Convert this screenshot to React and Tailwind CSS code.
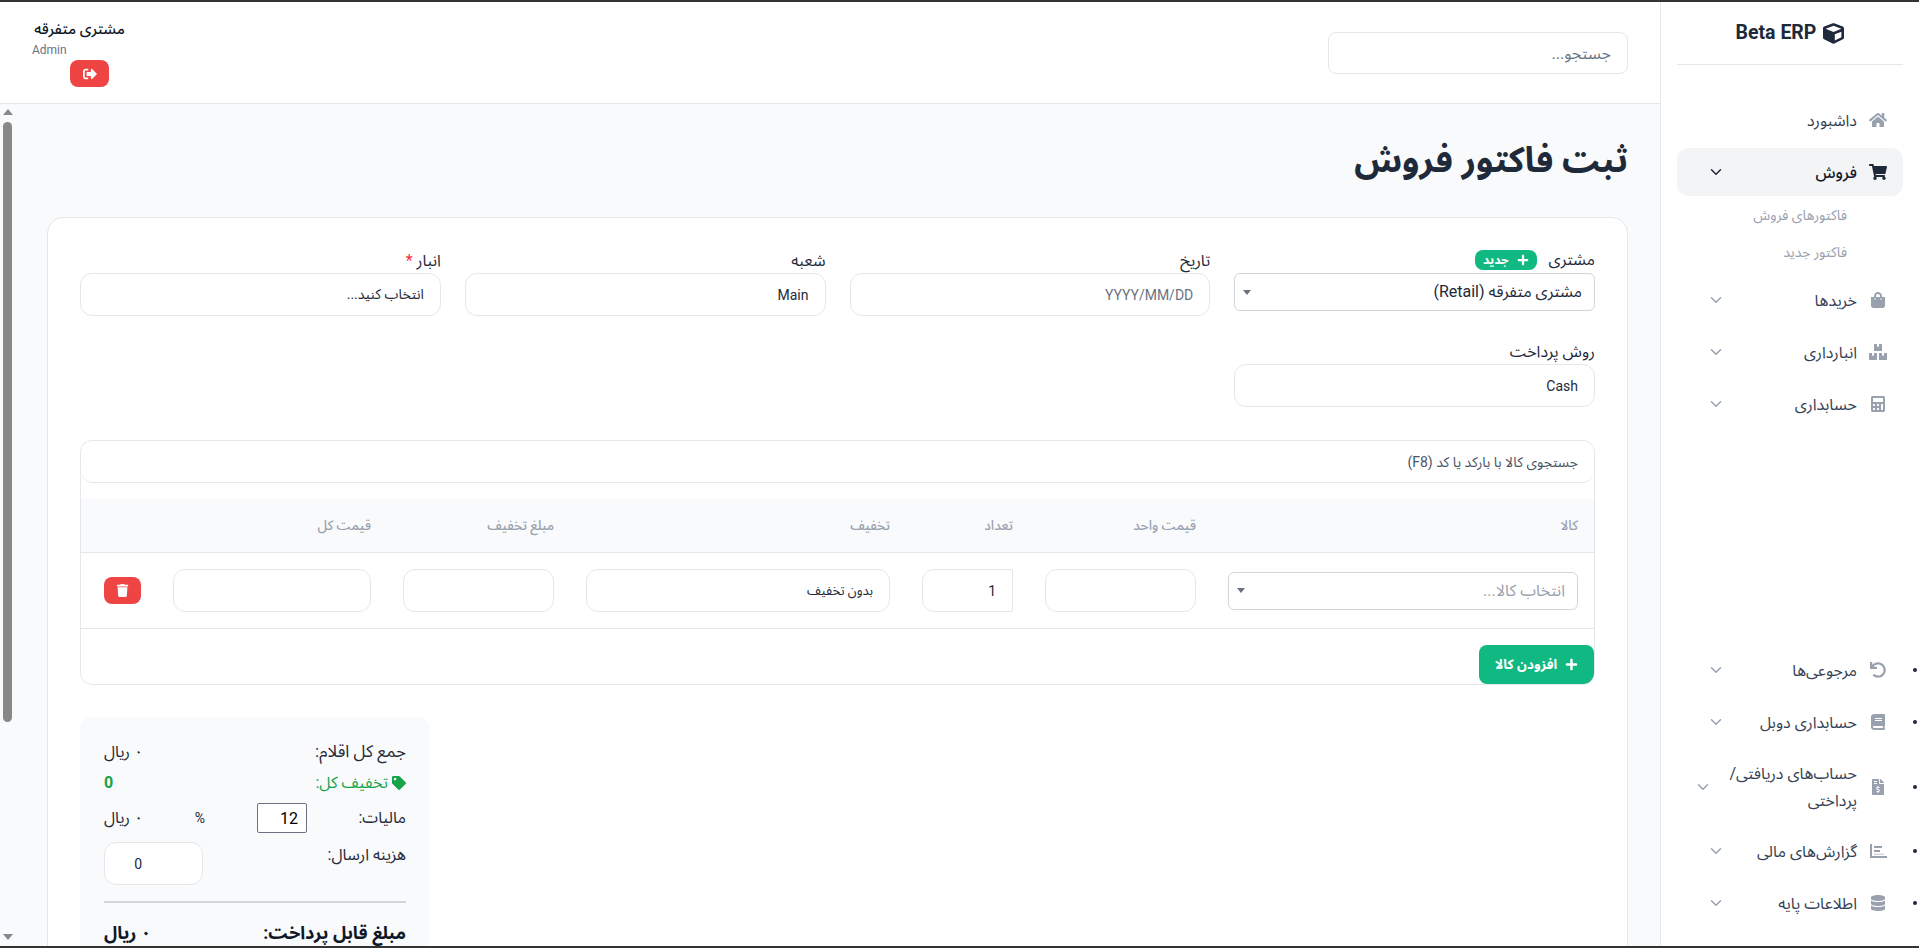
import React from "react";
import { FaHome, FaShoppingCart, FaShoppingBag, FaBoxes, FaCalculator, FaUndo, FaBook, FaFileInvoiceDollar, FaDatabase, FaCube, FaSignOutAlt, FaTrash, FaTag, FaPlus } from "react-icons/fa";
import { ChevronDown } from "lucide-react";

function ChartIcon({ className }) {
  return (
    <svg viewBox="0 0 18 16" fill="currentColor" className={className}>
      <path d="M1 1h2v12h15v2H1z" />
      <rect x="5" y="3" width="8" height="2" />
      <rect x="5" y="7" width="6" height="2" />
      <rect x="5" y="10.6" width="10" height="1.2" opacity="0.5" />
    </svg>
  );
}

function NavItem({ icon: Icon, label, active, chevron = true, bullet }) {
  return (
    <li className="relative">
      {bullet && <span className="absolute -right-[14px] top-1/2 size-[4px] -translate-y-1/2 rounded-full bg-gray-800" />}
      <a className={`flex min-h-12 items-center gap-3 rounded-xl py-[9.5px] pr-4 pl-6 text-base ${active ? "bg-gray-100 font-medium text-gray-900" : "text-gray-700"}`}>
        <Icon className={`h-4 w-[18px] shrink-0 ${active ? "text-gray-800" : "text-gray-400"}`} />
        <span className="flex-1 whitespace-nowrap leading-[27px]">{label}</span>
        {chevron && <ChevronDown size={18} className={`mx-[6px] shrink-0 ${active ? "text-gray-800" : "text-gray-400"}`} />}
      </a>
    </li>
  );
}

function Sidebar() {
  return (
    <aside className="flex w-[259px] shrink-0 flex-col overflow-hidden border-l border-gray-200 bg-white p-4">
      <div className="flex h-[47px] shrink-0 items-center justify-center gap-[7px] border-b border-gray-200 pb-[16px] text-[19.5px] font-bold text-gray-800" dir="ltr">
        <span>Beta ERP</span>
        <FaCube className="text-[21px]" />
      </div>
      <ul className="mt-[31px] flex flex-col gap-1">
        <NavItem icon={FaHome} label="داشبورد" chevron={false} />
        <NavItem icon={FaShoppingCart} label="فروش" active />
        <li className="-mt-1 mb-[2px] flex flex-col pr-[56px] text-sm text-gray-400">
          <span className="flex h-[37px] items-center">فاکتورهای فروش</span>
          <span className="flex h-[37px] items-center">فاکتور جدید</span>
        </li>
        <NavItem icon={FaShoppingBag} label="خریدها" />
        <NavItem icon={FaBoxes} label="انبارداری" />
        <NavItem icon={FaCalculator} label="حسابداری" />
      </ul>
      <ul className="mt-auto mb-[3px] flex flex-col gap-1">
        <NavItem bullet icon={FaUndo} label="مرجوعی‌ها" />
        <NavItem bullet icon={FaBook} label="حسابداری دوبل" />
        <NavItem bullet icon={FaFileInvoiceDollar} label={<>حساب‌های دریافتی/<br />پرداختی</>} />
        <NavItem bullet icon={ChartIcon} label="گزارش‌های مالی" />
        <NavItem bullet icon={FaDatabase} label="اطلاعات پایه" />
      </ul>
    </aside>
  );
}

function Header() {
  return (
    <header className="flex h-[102px] shrink-0 items-start justify-between border-b border-gray-200 bg-white px-[32px] pt-[30px]">
      <input readOnly placeholder="جستجو..." className="h-[42px] w-[300px] rounded-lg border border-gray-200 bg-white px-4 text-base placeholder:text-gray-500" />
      <div className="-mt-[13px] w-[93px]">
        <div className="whitespace-nowrap text-[15px] font-medium leading-5 text-gray-900">مشتری متفرقه</div>
        <div className="text-left text-xs leading-[22px] text-gray-500">Admin</div>
        <button className="-mt-px mr-4 flex h-[27px] w-[39px] items-center justify-center rounded-lg bg-[#ef4444] text-sm text-white">
          <FaSignOutAlt />
        </button>
      </div>
    </header>
  );
}

function Field({ label, children }) {
  return (
    <div className="flex flex-col">
      <div className="mb-px flex h-[22px] items-center gap-3 text-base text-gray-800">
        <span>{label}</span>
      </div>
      {children}
    </div>
  );
}

function SelectBox({ children, muted }) {
  return (
    <div className={`flex h-[38px] items-center justify-between rounded-md border border-gray-300 bg-white pr-[12px] pl-2 text-base ${muted ? "text-gray-400" : "text-gray-800"}`}>
      <span>{children}</span>
      <span className="h-0 w-0 border-x-4 border-t-[5px] border-x-transparent border-t-gray-500" />
    </div>
  );
}

function TextBox({ value, placeholder, className = "" }) {
  return (
    <input readOnly value={value ?? ""} placeholder={placeholder} className={`h-[43px] w-full rounded-xl border border-gray-200 bg-white px-4 text-sm text-gray-800 placeholder:text-gray-500 ${className}`} />
  );
}

function Invoice() {
  const heads = ["کالا", "قیمت واحد", "تعداد", "تخفیف", "مبلغ تخفیف", "قیمت کل", ""];
  return (
    <section className="rounded-2xl border border-gray-200 bg-white px-8 pt-8 pb-8">
      <div className="grid grid-cols-4 gap-x-6 gap-y-[25px]">
        <div className="flex flex-col">
          <div className="mb-[3px] flex h-5 items-center gap-3 text-base text-gray-800">
            <span>مشتری</span>
            <span className="flex h-5 items-center gap-2 rounded-lg bg-[#10b981] px-2 text-xs font-bold text-white">
              <FaPlus className="text-xs" />
              <span>جدید</span>
            </span>
          </div>
          <SelectBox>مشتری متفرقه (Retail)</SelectBox>
        </div>
        <Field label="تاریخ"><TextBox placeholder="YYYY/MM/DD" /></Field>
        <Field label="شعبه"><TextBox value="Main" /></Field>
        <Field label={<>انبار <span className="text-red-500">*</span></>}><TextBox value="انتخاب کنید..." /></Field>
        <Field label="روش پرداخت"><TextBox value="Cash" /></Field>
      </div>

      <div className="mt-[33px] overflow-hidden rounded-xl border border-gray-200">
        <input readOnly placeholder="جستجوی کالا با بارکد یا کد (F8)" className="h-[42px] w-full rounded-xl border-b border-gray-200 bg-white px-4 text-sm placeholder:text-gray-600" />
        <div className="mt-4 grid h-[54px] grid-cols-[382px_183px_123px_336px_183px_230px_1fr] items-center border-b border-gray-200 bg-gray-50 text-[13.5px] font-medium text-gray-400">
          {heads.map((h, i) => <div key={i} className="px-4">{h}</div>)}
        </div>
        <div className="grid h-[76px] grid-cols-[382px_183px_123px_336px_183px_230px_1fr] items-center border-b border-gray-200">
          <div className="px-4"><SelectBox muted>انتخاب کالا...</SelectBox></div>
          <div className="px-4"><TextBox /></div>
          <div className="px-4"><TextBox value="1" className="rounded-r-none" /></div>
          <div className="px-4"><TextBox value="بدون تخفیف" className="text-[13px]" /></div>
          <div className="px-4"><TextBox /></div>
          <div className="px-4"><TextBox /></div>
          <div className="flex justify-end pl-[23px]">
            <button className="flex h-[27px] w-[37px] items-center justify-center rounded-lg bg-[#ef4444] text-[13px] text-white"><FaTrash /></button>
          </div>
        </div>
        <div className="flex justify-start pt-4">
          <button className="flex h-[39px] w-[115px] items-center justify-center gap-2 rounded-lg bg-[#10b981] text-[13.5px] font-bold text-white">
            <FaPlus className="text-[13px]" />
            <span>افزودن کالا</span>
          </button>
        </div>
      </div>

      <div className="mt-[32px] flex justify-end">
        <div className="w-[350px] rounded-xl bg-gray-50 px-6 pt-[25px] pb-6 text-base text-gray-800">
          <div className="flex h-5 items-center justify-between"><span className="text-[17px]">جمع کل اقلام:</span><span>۰ ریال</span></div>
          <div className="mt-[11px] flex h-5 items-center justify-between text-[#16a34a]">
            <span className="flex items-center gap-1"><FaTag className="text-sm" /> تخفیف کل:</span>
            <span className="font-bold">0</span>
          </div>
          <div className="mt-[10px] flex h-[30px] items-center">
            <span className="w-[99px]">مالیات:</span>
            <input readOnly value="12" className="h-[30px] w-[50px] rounded-[2px] border border-gray-500 bg-white px-2 text-base text-black" />
            <span className="mr-[52px] w-[10px] text-sm">%</span>
            <span className="mr-auto">۰ ریال</span>
          </div>
          <div className="mt-[9px] flex items-start justify-between">
            <span className="mt-px">هزینه ارسال:</span>
            <input readOnly value="0" className="h-[43px] w-[99px] rounded-xl border border-gray-200 bg-white pr-[60px] text-sm" />
          </div>
          <hr className="my-4 border-t-2 border-gray-300" />
          <div className="flex items-center justify-between text-lg font-bold text-gray-900"><span>مبلغ قابل پرداخت:</span><span>۰ ریال</span></div>
        </div>
      </div>
    </section>
  );
}

function FakeScrollbar() {
  return (
    <div className="absolute top-0 bottom-0 left-0 w-4 bg-gray-50">
      <span className="absolute top-[5px] left-[3px] h-0 w-0 border-x-[5px] border-b-[6px] border-x-transparent border-b-[#888]" />
      <span className="absolute top-[18px] left-[3px] h-[600px] w-[9px] rounded-full bg-[#888]" />
      <span className="absolute bottom-[6px] left-[3px] h-0 w-0 border-x-[5px] border-t-[6px] border-x-transparent border-t-[#888]" />
    </div>
  );
}

export default function App() {
  return (
    <div dir="rtl" className="flex h-screen w-full overflow-hidden border-y-2 border-[#333] bg-white font-['Roboto','Noto_Sans_Arabic','Noto_Sans','DejaVu_Sans',sans-serif]">
      <Sidebar />
      <div className="flex min-w-0 flex-1 flex-col">
        <Header />
        <main className="relative flex-1 overflow-hidden bg-gray-50 pt-[32px] pr-[32px] pl-[47px]">
          <FakeScrollbar />
          <h1 className="mb-[31px] h-[50px] text-[35px] font-bold leading-[50px] text-gray-800">ثبت فاکتور فروش</h1>
          <Invoice />
        </main>
      </div>
    </div>
  );
}
